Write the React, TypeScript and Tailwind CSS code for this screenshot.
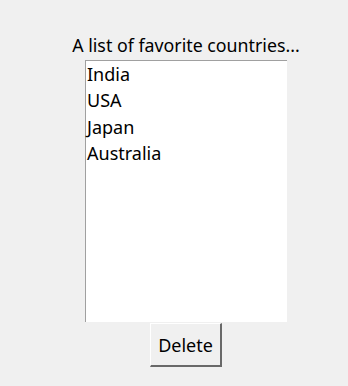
export default function App() {
  const countries = ['India', 'USA', 'Japan', 'Australia'];

  return (
    <div
      className="w-[348px] h-[386px] bg-[#f0f0f0] pl-[24px] pt-[31px] flex flex-col items-center text-black"
      style={{ fontFamily: '"Noto Sans", "Open Sans", sans-serif' }}
    >
      <div className="text-[17.8px] leading-[28px] h-[29px]">A list of favorite countries...</div>
      <ul className="w-[202px] h-[262px] bg-white border-l border-t border-[#a0a0a0] pl-[1px] text-[18px] leading-[26.3px]">
        {countries.map((c) => (
          <li key={c}>{c}</li>
        ))}
      </ul>
      <button
        type="button"
        className="mt-[1px] w-[72px] h-[44px] bg-[#f0f0f0] border-t border-l border-white border-r-2 border-b-2 border-r-[#696969] border-b-[#696969] text-[18px] leading-none"
      >
        Delete
      </button>
    </div>
  );
}
